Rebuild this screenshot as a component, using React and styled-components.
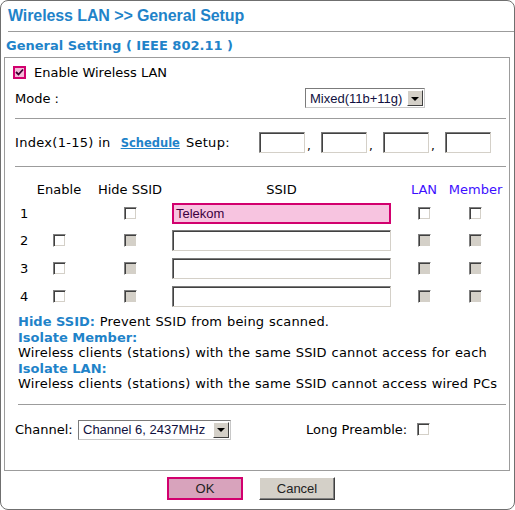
import React from 'react';
import styled, { createGlobalStyle } from 'styled-components';

const GlobalStyle = createGlobalStyle`
  body {
    margin: 0;
    background: #fff;
    color: #000;
    font-family: "DejaVu Sans", Verdana, sans-serif;
    font-size: 13px;
  }
`;

const BLUE = '#1f83c9';
const MAGENTA = '#d2006e';

const Frame = styled.div`
  width: 515px;
  height: 510px;
  box-sizing: border-box;
  border: 1px solid #6f6f6f;
  border-radius: 8px;
  display: flex;
  flex-direction: column;
  background: #fff;
`;

const Title = styled.div`
  height: 30px;
  flex-shrink: 0;
  padding-left: 7px;
  font: bold 16px "Liberation Sans", Arial, sans-serif;
  line-height: 30px;
  letter-spacing: -0.1px;
  color: ${BLUE};
`;

const Rule = styled.div`
  border-top: 1px solid #9c9c9c;
  margin: ${(p) => p.$margin || '0'};
`;

const Heading = styled.div`
  height: 25px;
  box-sizing: border-box;
  padding: 6px 0 0 5px;
  line-height: 16px;
  font-weight: bold;
  font-size: 13px;
  color: ${BLUE};
`;

const Box = styled.div`
  margin: 0 4px 0 3px;
  height: 414px;
  flex-shrink: 0;
  box-sizing: border-box;
  border: 1px solid #9c9c9c;
  padding-top: 4px;
`;

const EnableRow = styled.label`
  height: 20px;
  display: flex;
  align-items: center;
  gap: 8px;
  padding-left: 8px;
`;

const FormRow = styled.div`
  display: grid;
  grid-template-columns: ${(p) => p.$cols};
  align-items: center;
  height: ${(p) => p.$height}px;
  padding-left: 10px;
  margin-top: ${(p) => p.$top || 0}px;
`;

const Label = styled.span`
  letter-spacing: 0.3px;
  white-space: nowrap;
`;

const Link = styled.a`
  color: ${BLUE};
  font-weight: bold;
  font-size: 11.5px;
  letter-spacing: 0;
  text-decoration: underline;
  margin: 0 6px 0 10px;
`;

const Inputs = styled.div`
  display: flex;
  align-items: center;
`;

const Comma = styled.span`
  width: 16px;
  padding: 6px 0 0 2px;
  box-sizing: border-box;
  font-size: 12px;
`;

const TextBox = styled.div`
  width: ${(p) => p.$width}px;
  height: 21px;
  box-sizing: border-box;
  background: #fff;
  border: 1px solid;
  border-color: #7b7b7b #d4d0c8 #d4d0c8 #7b7b7b;
  box-shadow: inset 1px 1px #424242;
  font: 13px "Liberation Sans", Arial, sans-serif;
  line-height: 19px;
  padding-left: 3px;
`;

const PinkBox = styled(TextBox)`
  border: 2px solid ${MAGENTA};
  box-shadow: none;
  background: #f7c4e0;
  line-height: 17px;
  padding-left: 2px;
  color: #3a0040;
`;

const Select = styled.div`
  width: ${(p) => p.$width}px;
  height: 20px;
  box-sizing: border-box;
  display: flex;
  align-items: center;
  background: #fff;
  border: 1px solid;
  border-color: #7b7b7b #c8c8c8 #c8c8c8 #7b7b7b;
  font: 13px "Liberation Sans", Arial, sans-serif;
`;

const SelectText = styled.span`
  flex: 1;
  padding-left: 4px;
  white-space: nowrap;
  color: #101040;
`;

const SelectArrow = styled.span`
  width: 16px;
  height: 16px;
  margin-right: 1px;
  box-sizing: border-box;
  background: #d4d0c8;
  border: 1px solid;
  border-color: #fff #404040 #404040 #fff;
  display: flex;
  align-items: center;
  justify-content: center;

  &::after {
    content: '';
    border-left: 4px solid transparent;
    border-right: 4px solid transparent;
    border-top: 4px solid #000;
    margin-top: 1px;
  }
`;

const Check = styled.span`
  display: inline-block;
  width: 13px;
  height: 13px;
  box-sizing: border-box;
  border: 1px solid;
  border-color: #808080 #fff #fff #808080;
  box-shadow: inset 1px 1px #404040, inset -1px -1px #d4d0c8;
  background: ${(p) => (p.$disabled ? '#d4d0c8' : '#fff')};
`;

const PinkCheck = styled.span`
  width: 13px;
  height: 13px;
  box-sizing: border-box;
  border: 2px solid ${MAGENTA};
  background: #f3bcd9;
  display: flex;
  align-items: center;
  justify-content: center;
`;

const Table = styled.div`
  display: grid;
  grid-template-columns: 15px 58px 84px 219px 66px 37px;
  grid-template-rows: 22px 26px 28px 28px 28px;
  margin: 11px 0 0 10px;
  align-items: center;
  justify-items: center;
`;

const HeadCell = styled.span`
  white-space: nowrap;
  color: ${(p) => (p.$accent ? '#3d10ff' : '#000')};
`;

const Num = styled.span`
  justify-self: start;
  padding-left: 5px;
`;

const Help = styled.div`
  margin: 4px 0 0 13px;
  line-height: 15.5px;
  white-space: nowrap;
  letter-spacing: 0.17px;
  word-spacing: 0.5px;
`;

const Term = styled.b`
  color: ${BLUE};
  font-size: 13px;
  letter-spacing: 0;
  word-spacing: 0;
`;

const Preamble = styled.span`
  display: flex;
  align-items: center;
  gap: 10px;
`;

const Buttons = styled.div`
  display: flex;
  gap: 16px;
  padding-left: 166px;
  margin-top: 6px;
`;

const Button = styled.button`
  width: 76px;
  height: 23px;
  box-sizing: border-box;
  padding: 0;
  font: 13px "Liberation Sans", Arial, sans-serif;
  color: #222;
  background: ${(p) => (p.$primary ? '#d8a3bc' : '#d4d0c8')};
  border: ${(p) => (p.$primary ? `2px solid ${MAGENTA}` : '1px solid')};
  border-color: ${(p) => (p.$primary ? MAGENTA : '#fff #404040 #404040 #fff')};
  box-shadow: ${(p) => (p.$primary ? 'none' : 'inset -1px -1px #808080')};
`;

const rows = [
  { n: 1, enable: false, pink: true, value: 'Telekom' },
  { n: 2, enable: true },
  { n: 3, enable: true },
  { n: 4, enable: true },
];

export default function App() {
  return (
    <>
      <GlobalStyle />
      <Frame>
        <Title>Wireless LAN &gt;&gt; General Setup</Title>
        <Rule $margin="0 0 0 7px" />
        <Heading>General Setting ( IEEE 802.11 )</Heading>
        <Box>
          <EnableRow>
            <PinkCheck>
              <svg width="9" height="9" viewBox="0 0 9 9">
                <path d="M1 4 L3.5 6.5 L8 1.5" fill="none" stroke="#3a0030" strokeWidth="1.8" />
              </svg>
            </PinkCheck>
            Enable Wireless LAN
          </EnableRow>

          <FormRow $cols="290px auto" $height={24} $top={4}>
            <span>Mode :</span>
            <Select $width={120}>
              <SelectText>Mixed(11b+11g)</SelectText>
              <SelectArrow />
            </Select>
          </FormRow>

          <Rule $margin="8px 3px 0 10px" />

          <FormRow $cols="244px auto" $height={47}>
            <Label>
              Index(1-15) in<Link>Schedule</Link>Setup:
            </Label>
            <Inputs>
              <TextBox $width={46} />
              <Comma>,</Comma>
              <TextBox $width={46} />
              <Comma>,</Comma>
              <TextBox $width={46} />
              <Comma>,</Comma>
              <TextBox $width={46} />
            </Inputs>
          </FormRow>

          <Rule $margin="0 3px 0 10px" />

          <Table>
            <span />
            <HeadCell>Enable</HeadCell>
            <HeadCell>Hide SSID</HeadCell>
            <HeadCell>SSID</HeadCell>
            <HeadCell $accent>LAN</HeadCell>
            <HeadCell $accent>Member</HeadCell>
            {rows.map((r) => (
              <React.Fragment key={r.n}>
                <Num>{r.n}</Num>
                {r.enable ? <Check /> : <span />}
                <Check $disabled={r.n !== 1} />
                {r.pink ? (
                  <PinkBox $width={219}>{r.value}</PinkBox>
                ) : (
                  <TextBox $width={219} />
                )}
                <Check $disabled={r.n !== 1} />
                <Check $disabled={r.n !== 1} />
              </React.Fragment>
            ))}
          </Table>

          <Help>
            <Term>Hide SSID:</Term> Prevent SSID from being scanned.
            <br />
            <Term>Isolate Member:</Term>
            <br />
            Wireless clients (stations) with the same SSID cannot access for each
            <br />
            <Term>Isolate LAN:</Term>
            <br />
            Wireless clients (stations) with the same SSID cannot access wired PCs
          </Help>

          <Rule $margin="12px 3px 0 13px" />

          <FormRow $cols="63px 228px auto" $height={50}>
            <span>Channel:</span>
            <Select $width={153}>
              <SelectText>Channel 6, 2437MHz</SelectText>
              <SelectArrow />
            </Select>
            <Preamble>
              Long Preamble:
              <Check />
            </Preamble>
          </FormRow>
        </Box>

        <Buttons>
          <Button $primary>OK</Button>
          <Button>Cancel</Button>
        </Buttons>
      </Frame>
    </>
  );
}
